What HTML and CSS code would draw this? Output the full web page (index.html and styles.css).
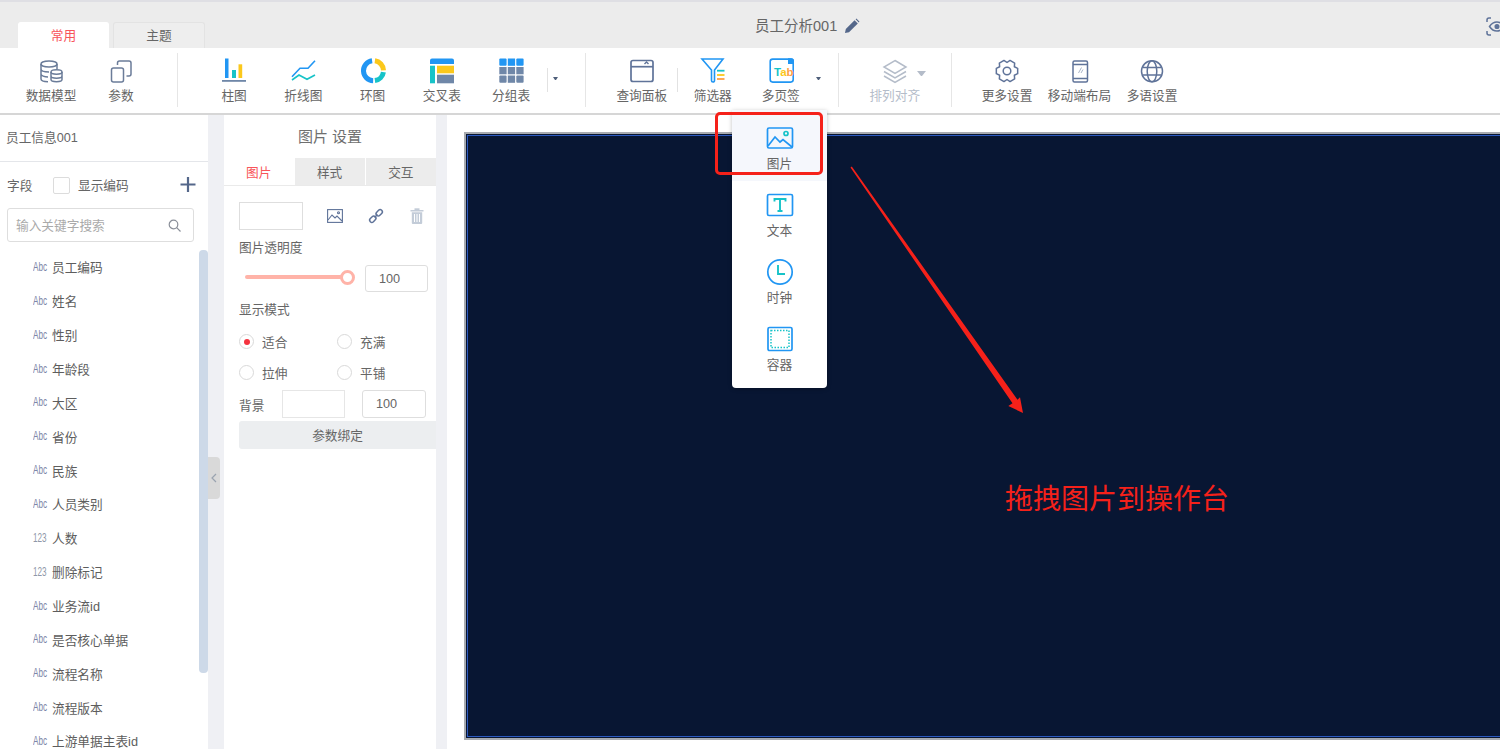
FILE: index.html
```html
<!DOCTYPE html>
<html>
<head>
  <meta charset="UTF-8">
  <meta name="viewport" content="width=device-width, initial-scale=1.0">
  <title>员工分析001</title>
  <link rel="stylesheet" href="styles.css">
</head>
<body>
<div class="page">

  <header class="topbar">
    <div class="tabs">
      <div class="tab active">常用</div>
      <div class="tab">主题</div>
    </div>
    <div class="doc-title">员工分析001</div>
    <svg class="pencil" width="16" height="16" viewBox="0 0 16 16"><path d="M1 15l.8-4L10.600 2.200l3.200 3.200L5 14.200z" fill="#54678a"/><path d="M11.600 1.200l.8-.6 3 3-.6.8z" fill="#54678a"/></svg>
    <svg class="eye" width="22" height="20" viewBox="0 0 22 20" fill="none" stroke="#5f7399" stroke-width="1.500"><path d="M1 5V3a2 2 0 0 1 2-2h2M1 14v2a2 2 0 0 0 2 2h2M17 1h2a2 2 0 0 1 2 2v2M17 18h2a2 2 0 0 0 2-2v-2"/><path d="M3.500 9.500C5.500 6.500 8 5 11 5s5.500 1.500 7.500 4.500C16.500 12.500 14 14 11 14s-5.500-1.500-7.500-4.500z"/><circle cx="11" cy="9.500" r="1.800" fill="#5f7399"/></svg>
  </header>

  <nav class="toolbar">
    <div class="tool">
      <svg width="28" height="26" viewBox="0 0 28 26" fill="none" stroke="#6b7c99" stroke-width="1.500"><ellipse cx="12" cy="6" rx="8" ry="3"/><path d="M4 6v15c0 1.700 3.500 2.700 7 2.700M20 6v5M4 11c0 1.700 3.500 3 8 3M4 16c0 1.700 3.500 3 7 3"/><ellipse cx="19.500" cy="14" rx="5.500" ry="2.200"/><path d="M14 14v7.500c0 1.400 2.500 2.200 5.500 2.200s5.500-.8 5.500-2.200V14M14 18c0 1.400 2.500 2.200 5.500 2.200s5.500-.8 5.500-2.200"/></svg>
      <span>数据模型</span>
    </div>
    <div class="tool">
      <svg width="28" height="26" viewBox="0 0 28 26" fill="none" stroke="#6b7c99" stroke-width="1.500"><rect x="4.500" y="10" width="12" height="14" rx="2"/><path d="M10.500 7V5a2 2 0 0 1 2-2H22a2 2 0 0 1 2 2v11a2 2 0 0 1-2 2h-2.500"/></svg>
      <span>参数</span>
    </div>
    <div class="sep sep-a"></div>
    <div class="tool-chart first">
      <svg width="28" height="26" viewBox="0 0 28 26"><rect x="5" y=".5" width="3.500" height="19.500" fill="#2196f3"/><rect x="12" y="12" width="4" height="8" fill="#17c3c8"/><rect x="18.500" y="6.300" width="3.700" height="13.700" fill="#fbc81c"/><rect x="2" y="22" width="24" height="1.800" fill="#6f87a8"/></svg>
      <span>柱图</span>
    </div>
    <div class="tool-chart">
      <svg width="28" height="26" viewBox="0 0 28 26" fill="none" stroke-width="1.600"><path d="M3 18.700l8-8.400h8l7-7.600" stroke="#2196f3"/><path d="M3 22l7-5 8 4.300 8-4.300" stroke="#17c3c8"/></svg>
      <span>折线图</span>
    </div>
    <div class="tool-chart">
      <svg width="28" height="26" viewBox="0 0 28 26" fill="none" stroke-width="5"><path d="M15.900 2.800A10 10 0 0 1 24.500 12.350" stroke="#fbc81c"/><path d="M24.400 14.100A10 10 0 0 1 15.900 22.600" stroke="#17c3c8"/><path d="M14.150 22.700A10 10 0 0 1 13.100 2.800" stroke="#2196f3"/></svg>
      <span>环图</span>
    </div>
    <div class="tool-chart">
      <svg width="28" height="26" viewBox="0 0 28 26"><path d="M2 6V2.500a2 2 0 0 1 2-2h20a2 2 0 0 1 2 2V6z" fill="#2196f3"/><rect x="2" y="7.700" width="5" height="17.600" fill="#17c3c8"/><rect x="9" y="7.700" width="17" height="7.600" fill="#fbc81c"/><rect x="9" y="16.700" width="17" height="8.600" fill="#6f87a8"/></svg>
      <span>交叉表</span>
    </div>
    <div class="tool-chart">
      <svg width="28" height="26" viewBox="0 0 28 26"><g fill="#2196f3"><rect x="2.300" y=".5" width="7.300" height="7.300" rx="1"/><rect x="10.800" y=".5" width="7.300" height="7.300"/><rect x="19.300" y=".5" width="7.300" height="7.300" rx="1"/></g><g fill="#6f87a8"><rect x="2.300" y="9" width="7.300" height="7.300"/><rect x="10.800" y="9" width="7.300" height="7.300"/><rect x="19.300" y="9" width="7.300" height="7.300"/><rect x="2.300" y="17.500" width="7.300" height="7.300" rx="1"/><rect x="10.800" y="17.500" width="7.300" height="7.300"/><rect x="19.300" y="17.500" width="7.300" height="7.300" rx="1"/></g></svg>
      <span>分组表</span>
    </div>
    <div class="sep-short sep-b"></div>
    <div class="caret caret-a"></div>
    <div class="sep sep-c"></div>
    <div class="tool query">
      <svg width="28" height="26" viewBox="0 0 28 26" fill="none" stroke="#5f7399" stroke-width="1.700"><rect x="3" y="2.500" width="22" height="21" rx="2"/><path d="M3 8.700h22"/><path d="M16.500 6l2-2 2 2" stroke-width="1.400"/></svg>
      <span>查询面板</span>
    </div>
    <div class="sep-short sep-d"></div>
    <div class="tool">
      <svg width="28" height="26" viewBox="0 0 28 26" fill="none"><path d="M3 1h21l-8.500 11v10.500a1.500 1.500 0 0 1-3 0V12z" stroke="#2196f3" stroke-width="1.600" fill="#fff"/><path d="M18 12.700h7.500" stroke="#17c3c8" stroke-width="1.800"/><path d="M18 17h7.500" stroke="#fbc81c" stroke-width="1.800"/><path d="M18 21h7.500" stroke="#ff9f43" stroke-width="1.800"/></svg>
      <span>筛选器</span>
    </div>
    <div class="tool tool-tab">
      <svg width="28" height="26" viewBox="0 0 28 26"><rect x="3.200" y="1.100" width="23" height="23" rx="2.500" fill="#fff" stroke="#2196f3" stroke-width="1.600"/><path d="M21 .3h3.500a2.500 2.500 0 0 1 2.500 2.500V6h-6z" fill="#2196f3"/><text x="7" y="18" class="tab-glyph"><tspan fill="#17c3c8">T</tspan><tspan fill="#fbc81c">a</tspan><tspan fill="#ff9f43">b</tspan></text></svg>
      <span>多页签</span>
    </div>
    <div class="caret caret-b"></div>
    <div class="sep sep-e"></div>
    <div class="tool tool-wide disabled">
      <div class="layer-wrap">
        <svg width="28" height="26" viewBox="0 0 28 26" fill="none" stroke="#b4bcc9" stroke-width="1.500"><path d="M14 2.500L25 9l-11 6.500L3 9z"/><path d="M3 13.500l11 6.500 11-6.500M3 18l11 6.500L25 18"/></svg>
        <div class="caret-grey"></div>
      </div>
      <span>排列对齐</span>
    </div>
    <div class="sep"></div>
    <div class="tool tool-set first-set">
      <svg width="28" height="26" viewBox="0 0 28 26" fill="none" stroke="#5f7399" stroke-width="1.500" stroke-linejoin="round"><path d="M24.670 10.340V15.660L21.360 17.250 21.640 20.910 17.030 23.570 14 21.500 10.970 23.570 6.360 20.910 6.640 17.250 3.330 15.660V10.340L6.640 8.750 6.360 5.090 10.970 2.430 14 4.500 17.030 2.430 21.640 5.090 21.360 8.750z"/><circle cx="14" cy="13" r="3.800"/></svg>
      <span>更多设置</span>
    </div>
    <div class="tool tool-set">
      <svg width="28" height="26" viewBox="0 0 28 26" fill="none" stroke="#5f7399" stroke-width="1.500"><rect x="7" y="3" width="14.500" height="21" rx="1.500"/><path d="M7 6.500h14.500M7 20.500h14.500"/><path d="M12.500 15l3-5.500M15 15l2-3.500" stroke="#a9b5c9" stroke-width="1"/></svg>
      <span>移动端布局</span>
    </div>
    <div class="tool tool-set">
      <svg width="28" height="26" viewBox="0 0 28 26" fill="none" stroke="#5f7399" stroke-width="1.500"><circle cx="14" cy="13.300" r="10.500"/><ellipse cx="14" cy="13.300" rx="4.800" ry="10.500"/><path d="M4.500 9.500h19M4.500 17h19"/></svg>
      <span>多语设置</span>
    </div>
  </nav>

  <main class="workspace">
    <aside class="fields">
      <div class="fields-title">员工信息001</div>
      <div class="fields-head">
        <span class="fields-label">字段</span>
        <span class="checkbox"></span>
        <span class="fields-code">显示编码</span>
        <svg class="plus" width="16" height="16" viewBox="0 0 16 16"><path d="M8 0v15M.5 7.500h15" stroke="#54678a" stroke-width="2.200"/></svg>
      </div>
      <div class="search">
        <span class="search-hint">输入关键字搜索</span>
        <svg width="13" height="13" viewBox="0 0 13 13" fill="none" stroke="#8a8f99" stroke-width="1.200"><circle cx="5.500" cy="5.500" r="4.300"/><path d="M8.700 8.700L12.500 12.500"/></svg>
      </div>
      <div class="field-wrap">
        <ul class="field-list">
          <li><i>Abc</i>员工编码</li>
          <li><i>Abc</i>姓名</li>
          <li><i>Abc</i>性别</li>
          <li><i>Abc</i>年龄段</li>
          <li><i>Abc</i>大区</li>
          <li><i>Abc</i>省份</li>
          <li><i>Abc</i>民族</li>
          <li><i>Abc</i>人员类别</li>
          <li><i class="num">123</i>人数</li>
          <li><i class="num">123</i>删除标记</li>
          <li><i>Abc</i>业务流id</li>
          <li><i>Abc</i>是否核心单据</li>
          <li><i>Abc</i>流程名称</li>
          <li><i>Abc</i>流程版本</li>
          <li><i>Abc</i>上游单据主表id</li>
        </ul>
        <div class="scrollbar"></div>
      </div>
    </aside>

    <div class="gutter gutter-left">
      <div class="collapse"><svg width="6" height="10" viewBox="0 0 6 10" fill="none" stroke="#9aa3b0" stroke-width="1.200"><path d="M5 1L1 5l4 4"/></svg></div>
    </div>

    <section class="settings">
      <div class="settings-title">图片 设置</div>
      <div class="settings-tabs">
        <div class="stab active">图片</div>
        <div class="stab">样式</div>
        <div class="stab">交互</div>
      </div>
      <div class="settings-body">
        <div class="img-row">
          <div class="img-box"></div>
          <svg class="ic-pic" width="16" height="14" viewBox="0 0 16 14" fill="none" stroke="#5f7399" stroke-width="1.100"><rect x=".6" y=".6" width="14.800" height="12.800"/><path d="M1 11l4-5 3 3 2-2 5 5"/><circle cx="11.500" cy="3.800" r="1"/></svg>
          <svg class="ic-link" width="16" height="16" viewBox="0 0 16 16" fill="none" stroke="#5f7399" stroke-width="1.500"><rect x="-3.500" y="-2.200" width="7" height="4.400" rx="2.200" transform="translate(4.800 11.200) rotate(-45)"/><rect x="-3.500" y="-2.200" width="7" height="4.400" rx="2.200" transform="translate(11.200 4.800) rotate(-45)"/><path d="M6.500 9.500l3-3"/></svg>
          <svg class="ic-trash" width="14" height="16" viewBox="0 0 14 16" fill="#c3ccd8"><rect x=".5" y="2" width="13" height="1.500"/><rect x="4.500" y=".3" width="5" height="1.700"/><path d="M1.800 4.200h10.400V15a1 1 0 0 1-1 1H2.800a1 1 0 0 1-1-1zM4 6v8h1V6zm2.500 0v8h1V6zM9 6v8h1V6z" fill-rule="evenodd"/></svg>
        </div>
        <div class="s-label opacity-label">图片透明度</div>
        <div class="slider-row">
          <div class="track"></div>
          <div class="knob"></div>
          <div class="num-input">100</div>
        </div>
        <div class="s-label mode-label">显示模式</div>
        <div class="radio-row first">
          <div class="radio-item"><span class="radio on"></span><span class="radio-text">适合</span></div>
          <div class="radio-item"><span class="radio"></span><span class="radio-text">充满</span></div>
        </div>
        <div class="radio-row">
          <div class="radio-item"><span class="radio"></span><span class="radio-text">拉伸</span></div>
          <div class="radio-item"><span class="radio"></span><span class="radio-text">平铺</span></div>
        </div>
        <div class="bg-row">
          <span class="bg-label">背景</span>
          <div class="bg-box"></div>
          <div class="num-input bg-num">100</div>
        </div>
        <div class="bind-btn">参数绑定</div>
      </div>
    </section>

    <div class="gutter gutter-right"></div>

    <section class="canvas">
      <div class="stage"><div class="stage-inner"></div></div>
    </section>
  </main>

  <!-- dropdown of the 多页签 tool -->
  <div class="dropdown">
    <div class="drop-item hover">
      <svg width="28" height="28" viewBox="0 0 28 28" fill="none" stroke="#2196f3" stroke-width="1.700"><rect x="1.500" y="4" width="25" height="20" rx="1.500"/><path d="M2 22l7-9 5 5 3-2.500 9 7.500"/><circle cx="20" cy="9.500" r="2" stroke="#17c3c8"/></svg>
      <span>图片</span>
    </div>
    <div class="drop-item">
      <svg width="28" height="28" viewBox="0 0 28 28" fill="none"><rect x="1.500" y="3.500" width="25" height="21" rx="1.500" stroke="#2196f3" stroke-width="1.700"/><path d="M8.500 10.500V8h11v2.500M14 8v12M11.500 20h5" stroke="#17c3c8" stroke-width="1.900"/></svg>
      <span>文本</span>
    </div>
    <div class="drop-item">
      <svg width="28" height="28" viewBox="0 0 28 28" fill="none"><circle cx="14" cy="14" r="12.200" stroke="#2196f3" stroke-width="1.700"/><path d="M12 7v9h7" stroke="#17c3c8" stroke-width="1.900"/></svg>
      <span>时钟</span>
    </div>
    <div class="drop-item">
      <svg width="28" height="28" viewBox="0 0 28 28" fill="none"><rect x="2" y="2.500" width="24" height="23" rx="1.500" stroke="#2196f3" stroke-width="1.700"/><rect x="5" y="5.500" width="18" height="17" stroke="#17c3c8" stroke-width="1.500" stroke-dasharray="1.500 1.500"/></svg>
      <span>容器</span>
    </div>
  </div>

  <div class="red-box"></div>
  <svg class="red-arrow" width="180" height="252" viewBox="850 165 180 252"><polygon points="850.500,167.500 851.800,166.600 1017.500,399.800 1020,397.300 1023,413 1008.300,406 1012.500,403.200" fill="#f5211a"/></svg>
  <div class="drag-note">拖拽图片到操作台</div>

</div>
</body>
</html>
```

FILE: styles.css
```css
* {
  box-sizing: border-box;
}
html, body {
  margin: 0;
  height: 100%;
  overflow: hidden;
}
body {
  font-family: "Liberation Sans", "Noto Sans CJK SC", sans-serif;
  font-size: 12.700px;
  color: #666;
  background: #fff;
}
.page {
  position: relative;
  width: 1500px;
  height: 749px;
  overflow: hidden;
}

/* top bar */
.topbar {
  display: flex;
  height: 48px;
  background: #ececec;
  border-top: 2px solid #dfdfe4;
  padding-left: 18px;
}
.tabs {
  display: flex;
  gap: 4px;
  padding-top: 20px;
}
.tab {
  width: 92px;
  height: 26px;
  line-height: 26px;
  text-align: center;
  color: #666;
  background: #eee;
  border: 1px solid #e3e3e3;
  border-bottom: none;
  border-radius: 3px 3px 0 0;
}
.tab.active {
  width: 91px;
  background: #fff;
  border-color: #fff;
  color: #f8555a;
}
.doc-title {
  flex: none;
  margin-left: 550px;
  padding-top: 15px;
  font-size: 14.500px;
  line-height: 18px;
  white-space: nowrap;
  color: #666;
}
.pencil {
  flex: none;
  margin: 16px 0 0 7px;
}
.eye {
  flex: none;
  margin: 15px -8px 0 auto;
}

/* toolbar */
.toolbar {
  display: flex;
  height: 67px;
  padding-left: 16px;
  background: #fff;
  border-bottom: 2px solid #d6d6d6;
}
.tool, .tool-chart {
  display: flex;
  flex-direction: column;
  align-items: center;
  flex: none;
  width: 70px;
  padding-top: 10px;
}
.tool-chart {
  width: 69.250px;
}
.tool-chart.first {
  margin-left: 21.500px;
}
.tool span, .tool-chart span {
  margin-top: 3px;
  line-height: 18px;
  white-space: nowrap;
}
.tool svg, .tool-chart svg {
  overflow: visible;
}
.tool-tab {
  width: 66px;
}
.tool-wide {
  width: 112px;
}
.tool-set {
  width: 72.500px;
}
.first-set {
  margin-left: 19px;
}
.query {
  margin-left: 21px;
}
.disabled span {
  color: #b4bcc9;
}
.layer-wrap {
  width: 28px;
  position: relative;
}
.layer-wrap svg {
  display: block;
}
.caret-grey {
  position: absolute;
  left: 36px;
  top: 13px;
  width: 9px;
  border: 4.500px solid transparent;
  border-top: 5px solid #b4bcc9;
  border-bottom: none;
}
.tab-glyph {
  font-family: "Liberation Sans Narrow", "Liberation Sans", sans-serif;
  font-size: 11.500px;
  font-weight: bold;
}
.sep {
  flex: none;
  width: 1px;
  height: 54px;
  margin-top: 5px;
  background: #e6e6e6;
}
.sep-a {
  margin-left: 21px;
}
.sep-c {
  margin-left: 26.500px;
}
.sep-e {
  margin-left: 17.250px;
}
.sep-short {
  flex: none;
  width: 1px;
  height: 24px;
  margin-top: 20px;
  background: #e2e2e2;
}
.sep-b {
  margin-left: 1px;
}
.caret {
  flex: none;
  width: 5px;
  height: 3px;
  margin-top: 28.500px;
  border: 2.500px solid transparent;
  border-top: 3px solid #4f5f7a;
  border-bottom: none;
}
.caret-a {
  margin-left: 5.500px;
}
.caret-b {
  margin-left: 1.750px;
}

/* main area */
.workspace {
  display: flex;
  height: 634px;
}
.fields {
  flex: none;
  width: 207.500px;
  background: #fff;
}
.fields-title {
  height: 47px;
  line-height: 46px;
  padding-left: 6px;
  border-bottom: 1px solid #e4e6ea;
}
.fields-head {
  display: flex;
  align-items: center;
  height: 46px;
  padding-left: 7px;
}
.fields-label {
  width: 46px;
  margin-bottom: 2px;
}
.checkbox {
  width: 17px;
  height: 17px;
  border: 1px solid #dcdcdc;
  border-radius: 2px;
}
.fields-code {
  margin: 0 0 2px 8px;
}
.plus {
  margin-left: 51px;
}
.search {
  display: flex;
  align-items: center;
  justify-content: space-between;
  width: 187px;
  height: 34px;
  margin-left: 7px;
  padding: 0 12px 0 8px;
  border: 1px solid #dedede;
  border-radius: 3px;
  color: #aaa;
}
.search-hint {
  margin-bottom: 2px;
}
.field-wrap {
  display: flex;
  justify-content: space-between;
  height: 500px;
  margin-top: 8px;
}
.field-list {
  list-style: none;
  margin: 0;
  padding: 0 0 0 33px;
}
.field-list li {
  display: flex;
  align-items: center;
  height: 33.860px;
  white-space: nowrap;
  color: #5d5d5d;
}
.field-list i {
  display: block;
  width: 19px;
  font-style: normal;
  font-size: 12px;
  color: #7c86a8;
  transform: scaleX(.68);
  transform-origin: left center;
}
.field-list i.num {
  color: #8f97a8;
}
.scrollbar {
  flex: none;
  width: 8.500px;
  height: 423px;
  background: #cdd9e8;
  border-radius: 4px;
}
.gutter {
  flex: none;
  background: #eff0f4;
}
.gutter-left {
  width: 16.500px;
  position: relative;
}
.gutter-right {
  width: 11px;
}
.collapse {
  position: absolute;
  left: 0;
  top: 342px;
  display: flex;
  align-items: center;
  justify-content: center;
  width: 12.500px;
  height: 42px;
  background: #d9d9d9;
  border-radius: 0 4px 4px 0;
}

/* settings panel */
.settings {
  flex: none;
  width: 212px;
  background: #fff;
}
.settings-title {
  height: 43px;
  line-height: 44px;
  text-align: center;
  font-size: 15px;
  color: #6f6f6f;
}
.settings-tabs {
  display: flex;
  height: 28px;
  gap: 1px;
  border-bottom: 1px solid #eaeaea;
}
.stab {
  flex: 1;
  line-height: 30px;
  text-align: center;
  background: #ececec;
}
.stab.active {
  flex: none;
  width: 69.500px;
  background: #fff;
  color: #f8555a;
}
.settings-body {
  padding: 16px 0 0 15px;
}
.img-row {
  display: flex;
  align-items: center;
  height: 28px;
}
.img-box {
  width: 64px;
  height: 28px;
  border: 1px solid #dedede;
}
.ic-pic {
  margin-left: 24px;
}
.ic-link {
  margin-left: 25px;
}
.ic-trash {
  margin-left: 26px;
}
.s-label {
  line-height: 18px;
}
.opacity-label {
  margin-top: 9px;
}
.slider-row {
  display: flex;
  align-items: center;
  margin-top: 8px;
}
.track {
  width: 100px;
  height: 4px;
  margin: 0 0 3px 6px;
  border-radius: 2px;
  background: #ffb3a8;
}
.knob {
  flex: none;
  width: 15px;
  height: 15px;
  margin: 0 0 3px -5px;
  background: #fff;
  border: 3px solid #ffb3a8;
  border-radius: 50%;
}
.num-input {
  width: 63px;
  height: 27px;
  line-height: 27px;
  padding-left: 13px;
  margin-left: 10px;
  border: 1px solid #dedede;
  border-radius: 3px;
}
.mode-label {
  margin-top: 9px;
}
.radio-row {
  display: flex;
  height: 31px;
}
.radio-row.first {
  margin-top: 7.500px;
}
.radio-item {
  display: flex;
  align-items: center;
  width: 98px;
}
.radio-text {
  margin-bottom: 2px;
}
.radio {
  flex: none;
  position: relative;
  width: 15px;
  height: 15px;
  margin: 0 8px 1px 0;
  border: 1px solid #d9d9d9;
  border-radius: 50%;
}
.radio.on::after {
  content: "";
  position: absolute;
  left: 3.500px;
  top: 3.500px;
  width: 6px;
  height: 6px;
  border-radius: 50%;
  background: #f5333f;
}
.bg-row {
  display: flex;
  align-items: center;
  margin-top: 1.500px;
  height: 28px;
}
.bg-label {
  width: 43px;
}
.bg-box {
  width: 63px;
  height: 28px;
  border: 1px solid #e6e6e6;
}
.bg-num {
  width: 64px;
  height: 28px;
  margin-left: 17px;
}
.bind-btn {
  height: 28px;
  margin-top: 3px;
  line-height: 30px;
  text-align: center;
  background: #eceef0;
  border-radius: 3px 0 0 3px;
}

/* canvas */
.canvas {
  flex: 1;
  min-width: 0;
  padding: 17px 0 0 17px;
  background: #fff;
}
.stage {
  height: 608px;
  margin-right: -6px;
  padding: 1px;
  background: #081633;
  border: 2px solid #a8abb0;
}
.stage-inner {
  height: 100%;
  background: #081633;
  border: 1px solid #2c5ac0;
}

/* things lying over the page */
.dropdown {
  position: absolute;
  left: 732px;
  top: 110px;
  width: 95px;
  height: 278px;
  background: #fff;
  border-radius: 0 0 4px 4px;
  box-shadow: 0 1px 4px rgba(0, 0, 0, .25);
}
.drop-item {
  display: flex;
  flex-direction: column;
  align-items: center;
  height: 67px;
  padding-top: 10px;
}
.drop-item.hover {
  height: 71px;
  padding-top: 14px;
  background: #f5f7fc;
}
.drop-item span {
  margin-top: 3px;
  line-height: 18px;
}
.red-box {
  position: absolute;
  left: 715px;
  top: 112px;
  width: 108px;
  height: 63px;
  border: 3px solid #f5211a;
  border-radius: 5px;
}
.red-arrow {
  position: absolute;
  left: 850px;
  top: 165px;
}
.drag-note {
  position: absolute;
  left: 1005px;
  top: 482px;
  font-size: 28px;
  line-height: 36px;
  color: #f5211a;
  white-space: nowrap;
}
```
